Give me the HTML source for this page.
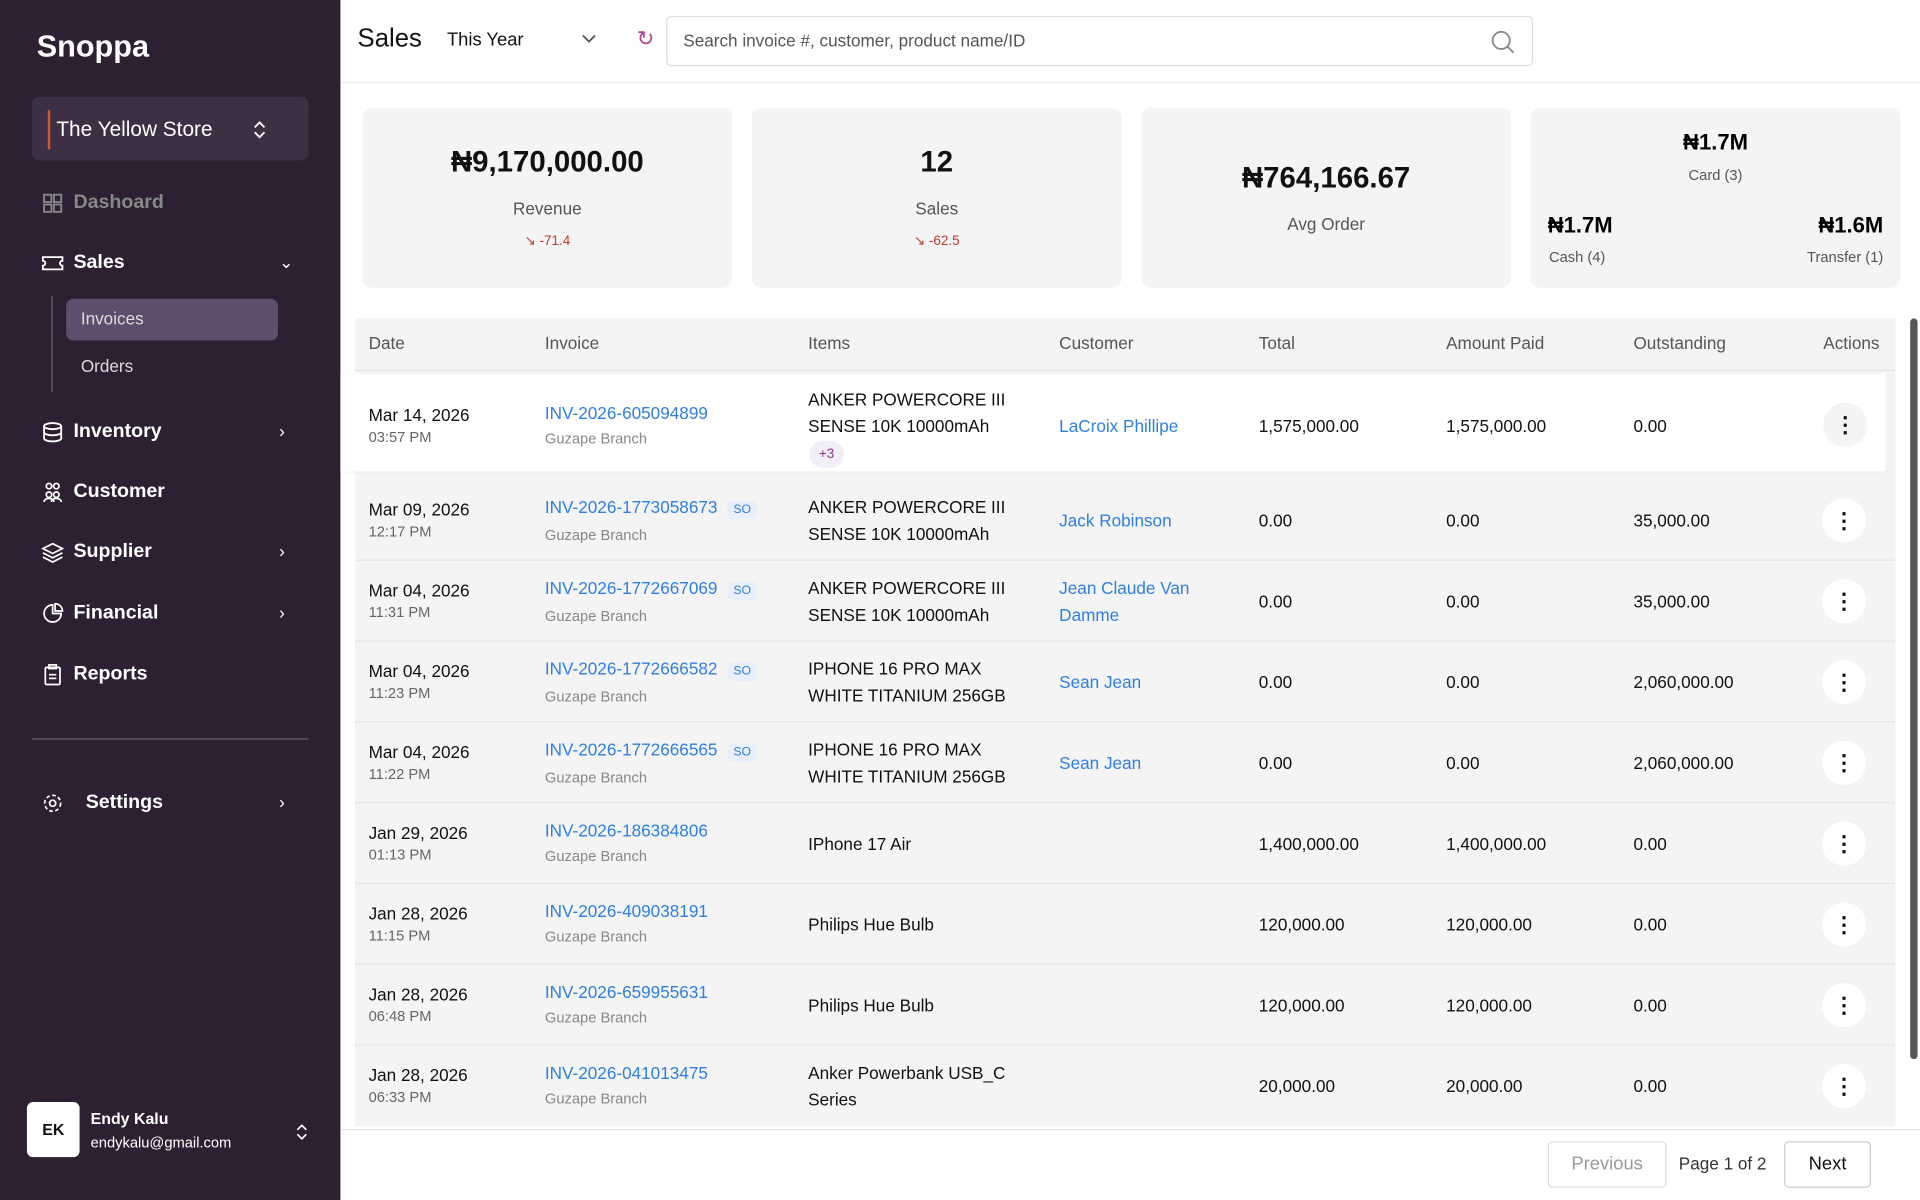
<!DOCTYPE html>
<html><head><meta charset="utf-8"><style>
*{box-sizing:border-box;margin:0;padding:0}
html,body{width:1920px;height:1200px;overflow:hidden;background:#fff;font-family:"Liberation Sans",sans-serif}
#w{width:1568px;height:980px;transform:scale(1.22449);transform-origin:0 0;position:relative}
.sb{position:absolute;left:0;top:0;width:278px;height:980px;background:#2c2032;color:#fff}
.abs{position:absolute}
.nav{position:absolute;left:34px;font-size:16px;font-weight:bold;display:flex;align-items:center;gap:8px}
.nav svg{width:18px;height:18px}
.chev{position:absolute;left:228px;font-size:14px}
.main{position:absolute;left:278px;top:0;right:0;bottom:0}
.card{position:absolute;top:88px;width:302px;height:147px;background:#f4f4f5;border-radius:8px;text-align:center}
.big{font-weight:bold;font-size:24px;color:#111}
.lbl{font-size:14px;color:#555}
.red{font-size:11px;color:#c0392b}
.th{position:absolute;top:272px;font-size:14px;color:#555}
.row{position:absolute;left:12px;width:1258px;height:66px;border-bottom:1px solid #e6e6e6}
.c{position:absolute;font-size:14px;color:#111}
.s{font-size:12px;color:#666;line-height:20px}
.lnk{color:#2f7fe0}
.g{font-size:12px;color:#888}
.so{display:inline-block;margin-left:8px;background:#e8eefb;color:#2f7fe0;font-size:10px;padding:2px 5px;border-radius:4px}
.dots{position:absolute;left:1198px;width:36px;height:36px;border-radius:50%;background:#fff;text-align:center;line-height:36px;font-weight:bold;font-size:18px;color:#111}
</style></head><body><div id="w">
<div class="sb">
 <div class="abs" style="left:30px;top:24px;font-size:25px;font-weight:bold">Snoppa</div>
 <div class="abs" style="left:26px;top:79px;width:226px;height:52px;background:#3d3045;border-radius:6px">
  <div class="abs" style="left:13px;top:11px;width:2px;height:32px;background:#d4572a"></div>
  <div class="abs" style="left:20px;top:17px;font-size:17px">The Yellow Store</div>
  <svg class="abs" style="left:180px;top:19px" width="12" height="16" viewBox="0 0 12 16" fill="none" stroke="#fff" stroke-width="1.5"><path d="M2 6l4-4 4 4M2 10l4 4 4-4"/></svg>
 </div>
 <div class="nav" style="top:157px;color:#888"><svg viewBox="0 0 18 18" fill="none" stroke="#888" stroke-width="1.5"><rect x="2" y="2" width="6" height="6"/><rect x="10" y="2" width="6" height="6"/><rect x="2" y="10" width="6" height="6"/><rect x="10" y="10" width="6" height="6"/></svg>Dashoard</div>
 <div class="nav" style="top:206px"><svg viewBox="0 0 18 18" fill="none" stroke="#fff" stroke-width="1.5"><path d="M1 4h16v3a2 2 0 0 0 0 4v3H1v-3a2 2 0 0 0 0-4z"/></svg>Sales</div><div class="chev" style="top:206px">⌄</div>
 <div class="abs" style="left:42px;top:242px;width:1px;height:78px;background:#666"></div>
 <div class="abs" style="left:54px;top:244px;width:173px;height:34px;background:#5e4d6c;border-radius:6px"></div>
 <div class="abs" style="left:66px;top:252px;font-size:14px;color:#ddd">Invoices</div>
 <div class="abs" style="left:66px;top:291px;font-size:14px;color:#ddd">Orders</div>
 <div class="nav" style="top:344px"><svg viewBox="0 0 18 18" fill="none" stroke="#fff" stroke-width="1.5"><ellipse cx="9" cy="4" rx="7" ry="2.5"/><path d="M2 4v10c0 1.4 3 2.5 7 2.5s7-1.1 7-2.5V4M2 9c0 1.4 3 2.5 7 2.5s7-1.1 7-2.5"/></svg>Inventory</div><div class="chev" style="top:344px">›</div>
 <div class="nav" style="top:393px"><svg viewBox="0 0 18 18" fill="none" stroke="#fff" stroke-width="1.4"><circle cx="6" cy="4" r="2.2"/><circle cx="12" cy="4" r="2.2"/><circle cx="6" cy="11" r="2.2"/><circle cx="12" cy="11" r="2.2"/><path d="M2 17c0-2 2-3 4-3s4 1 4 3M8 17c0-2 2-3 4-3s4 1 4 3"/></svg>Customer</div>
 <div class="nav" style="top:442px"><svg viewBox="0 0 18 18" fill="none" stroke="#fff" stroke-width="1.4"><path d="M9 2l8 4-8 4-8-4zM1 9.5l8 4 8-4M1 13l8 4 8-4"/></svg>Supplier</div><div class="chev" style="top:442px">›</div>
 <div class="nav" style="top:492px"><svg viewBox="0 0 18 18" fill="none" stroke="#fff" stroke-width="1.4"><path d="M9 2a7 7 0 1 0 7 7H9z"/><path d="M11 1v6h6a6 6 0 0 0-6-6z"/></svg>Financial</div><div class="chev" style="top:492px">›</div>
 <div class="nav" style="top:542px"><svg viewBox="0 0 18 18" fill="none" stroke="#fff" stroke-width="1.4"><rect x="3" y="3" width="12" height="14" rx="1"/><rect x="6" y="1" width="6" height="3"/><path d="M6 9h6M6 12h6"/></svg>Reports</div>
 <div class="abs" style="left:26px;top:603px;width:226px;height:1px;background:#666"></div>
 <div class="nav" style="top:647px;gap:18px"><svg viewBox="0 0 18 18" fill="none" stroke="#fff" stroke-width="1.4"><circle cx="9" cy="9" r="2.5"/><circle cx="9" cy="9" r="6.5" stroke-dasharray="3 2"/></svg>Settings</div><div class="chev" style="top:647px">›</div>
 <div class="abs" style="left:22px;top:900px;width:43px;height:45px;background:#fff;border-radius:5px;color:#111;font-size:13px;font-weight:bold;text-align:center;line-height:45px">EK</div>
 <div class="abs" style="left:74px;top:906px;font-size:13px;font-weight:bold">Endy Kalu</div>
 <div class="abs" style="left:74px;top:926px;font-size:12px">endykalu@gmail.com</div>
 <svg class="abs" style="left:241px;top:917px" width="11" height="15" viewBox="0 0 12 16" fill="none" stroke="#fff" stroke-width="1.5"><path d="M2 6l4-4 4 4M2 10l4 4 4-4"/></svg>
</div>
<div class="main">
 <div class="abs" style="left:14px;top:20px;font-size:21px;color:#111">Sales</div>
 <div class="abs" style="left:87px;top:24px;font-size:15px;color:#111">This Year</div>
 <svg class="abs" style="left:197px;top:28px" width="12" height="8" viewBox="0 0 12 8" fill="none" stroke="#555" stroke-width="1.5"><path d="M1 1l5 5 5-5"/></svg>
 <div class="abs" style="left:242px;top:22px;font-size:17px;color:#b04090">↻</div>
 <div class="abs" style="left:266px;top:13px;width:708px;height:41px;border:1px solid #ddd;border-radius:4px">
  <div class="abs" style="left:13px;top:11px;font-size:14px;color:#555">Search invoice #, customer, product name/ID</div>
  <svg class="abs" style="left:672px;top:10px" width="20" height="20" viewBox="0 0 20 20" fill="none" stroke="#888" stroke-width="1.5"><circle cx="9" cy="9" r="7"/><path d="M14 14l5 5"/></svg>
 </div>
 <div class="abs" style="left:0;top:67px;width:1290px;height:1px;background:#eee"></div>
 <div class="card" style="left:18px"><div class="big" style="margin-top:31px">₦9,170,000.00</div><div class="lbl" style="margin-top:15px">Revenue</div><div class="red" style="margin-top:12px">↘ -71.4</div></div>
 <div class="card" style="left:336px"><div class="big" style="margin-top:31px">12</div><div class="lbl" style="margin-top:15px">Sales</div><div class="red" style="margin-top:12px">↘ -62.5</div></div>
 <div class="card" style="left:654px"><div class="big" style="margin-top:44px">₦764,166.67</div><div class="lbl" style="margin-top:15px">Avg Order</div></div>
 <div class="card" style="left:972px">
  <div class="abs" style="left:0;right:0;top:18px;font-weight:bold;font-size:18px">₦1.7M</div><div class="abs" style="left:0;right:0;top:48px;font-size:12px;color:#555">Card (3)</div>
  <div class="abs" style="left:14px;top:86px;font-weight:bold;font-size:18px">₦1.7M</div><div class="abs" style="left:15px;top:115px;font-size:12px;color:#555">Cash (4)</div>
  <div class="abs" style="right:14px;top:86px;font-weight:bold;font-size:18px">₦1.6M</div><div class="abs" style="right:14px;top:115px;font-size:12px;color:#555">Transfer (1)</div>
 </div>
 <div class="abs" style="left:12px;top:260px;width:1258px;height:660px;background:#f4f4f4"></div>
 <div class="abs" style="left:12px;top:302px;width:1258px;height:1px;background:#e3e3e3"></div>
 <div class="th" style="left:23px">Date</div><div class="th" style="left:167px">Invoice</div><div class="th" style="left:382px">Items</div><div class="th" style="left:587px">Customer</div><div class="th" style="left:750px">Total</div><div class="th" style="left:903px">Amount Paid</div><div class="th" style="left:1056px">Outstanding</div><div class="th" style="left:1211px">Actions</div>
 <div class="abs" style="left:0;top:305px;width:1262px;height:80px;background:#fff;box-shadow:0 1px 3px rgba(0,0,0,.05)">
  <div class="c" style="left:23px;top:26px">Mar 14, 2026<br><span class="s">03:57 PM</span></div>
  <div class="c" style="left:167px;top:24px"><span class="lnk">INV-2026-605094899</span><br><span class="g" style="line-height:26px">Guzape Branch</span></div>
  <div class="c" style="left:382px;top:10px;line-height:22px">ANKER POWERCORE III<br>SENSE 10K 10000mAh</div>
  <div class="abs" style="left:383px;top:55px;width:28px;height:22px;border-radius:11px;background:#f1eef8;color:#8a3a8a;font-size:11px;text-align:center;line-height:22px">+3</div>
  <div class="c lnk" style="left:587px;top:35px">LaCroix Phillipe</div>
  <div class="c" style="left:750px;top:35px">1,575,000.00</div><div class="c" style="left:903px;top:35px">1,575,000.00</div><div class="c" style="left:1056px;top:35px">0.00</div>
  <div class="dots" style="left:1211px;top:24px;background:#f4f4f4">⋮</div>
 </div>
 <div class="abs" style="left:1282px;top:260px;width:6px;height:605px;background:#555;border-radius:3px"></div>

 <div class="row" style="top:392px"><div class="c" style="left:11px;top:16px">Mar 09, 2026<br><span class="s">12:17 PM</span></div><div class="c" style="left:155px;top:14px"><span class="lnk">INV-2026-1773058673</span><span class="so">SO</span><br><span class="g" style="line-height:26px">Guzape Branch</span></div><div class="c" style="left:370px;top:11px;line-height:22px">ANKER POWERCORE III<br>SENSE 10K 10000mAh</div><div class="c lnk" style="left:575px;top:25px">Jack Robinson</div><div class="c" style="left:738px;top:25px">0.00</div><div class="c" style="left:891px;top:25px">0.00</div><div class="c" style="left:1044px;top:25px">35,000.00</div><div class="dots" style="top:15px">⋮</div></div>
 <div class="row" style="top:458px"><div class="c" style="left:11px;top:16px">Mar 04, 2026<br><span class="s">11:31 PM</span></div><div class="c" style="left:155px;top:14px"><span class="lnk">INV-2026-1772667069</span><span class="so">SO</span><br><span class="g" style="line-height:26px">Guzape Branch</span></div><div class="c" style="left:370px;top:11px;line-height:22px">ANKER POWERCORE III<br>SENSE 10K 10000mAh</div><div class="c lnk" style="left:575px;top:11px;line-height:22px">Jean Claude Van<br>Damme</div><div class="c" style="left:738px;top:25px">0.00</div><div class="c" style="left:891px;top:25px">0.00</div><div class="c" style="left:1044px;top:25px">35,000.00</div><div class="dots" style="top:15px">⋮</div></div>
 <div class="row" style="top:524px"><div class="c" style="left:11px;top:16px">Mar 04, 2026<br><span class="s">11:23 PM</span></div><div class="c" style="left:155px;top:14px"><span class="lnk">INV-2026-1772666582</span><span class="so">SO</span><br><span class="g" style="line-height:26px">Guzape Branch</span></div><div class="c" style="left:370px;top:11px;line-height:22px">IPHONE 16 PRO MAX<br>WHITE TITANIUM 256GB</div><div class="c lnk" style="left:575px;top:25px">Sean Jean</div><div class="c" style="left:738px;top:25px">0.00</div><div class="c" style="left:891px;top:25px">0.00</div><div class="c" style="left:1044px;top:25px">2,060,000.00</div><div class="dots" style="top:15px">⋮</div></div>
 <div class="row" style="top:590px"><div class="c" style="left:11px;top:16px">Mar 04, 2026<br><span class="s">11:22 PM</span></div><div class="c" style="left:155px;top:14px"><span class="lnk">INV-2026-1772666565</span><span class="so">SO</span><br><span class="g" style="line-height:26px">Guzape Branch</span></div><div class="c" style="left:370px;top:11px;line-height:22px">IPHONE 16 PRO MAX<br>WHITE TITANIUM 256GB</div><div class="c lnk" style="left:575px;top:25px">Sean Jean</div><div class="c" style="left:738px;top:25px">0.00</div><div class="c" style="left:891px;top:25px">0.00</div><div class="c" style="left:1044px;top:25px">2,060,000.00</div><div class="dots" style="top:15px">⋮</div></div>
 <div class="row" style="top:656px"><div class="c" style="left:11px;top:16px">Jan 29, 2026<br><span class="s">01:13 PM</span></div><div class="c" style="left:155px;top:14px"><span class="lnk">INV-2026-186384806</span><br><span class="g" style="line-height:26px">Guzape Branch</span></div><div class="c" style="left:370px;top:25px">IPhone 17 Air</div><div class="c" style="left:738px;top:25px">1,400,000.00</div><div class="c" style="left:891px;top:25px">1,400,000.00</div><div class="c" style="left:1044px;top:25px">0.00</div><div class="dots" style="top:15px">⋮</div></div>
 <div class="row" style="top:722px"><div class="c" style="left:11px;top:16px">Jan 28, 2026<br><span class="s">11:15 PM</span></div><div class="c" style="left:155px;top:14px"><span class="lnk">INV-2026-409038191</span><br><span class="g" style="line-height:26px">Guzape Branch</span></div><div class="c" style="left:370px;top:25px">Philips Hue Bulb</div><div class="c" style="left:738px;top:25px">120,000.00</div><div class="c" style="left:891px;top:25px">120,000.00</div><div class="c" style="left:1044px;top:25px">0.00</div><div class="dots" style="top:15px">⋮</div></div>
 <div class="row" style="top:788px"><div class="c" style="left:11px;top:16px">Jan 28, 2026<br><span class="s">06:48 PM</span></div><div class="c" style="left:155px;top:14px"><span class="lnk">INV-2026-659955631</span><br><span class="g" style="line-height:26px">Guzape Branch</span></div><div class="c" style="left:370px;top:25px">Philips Hue Bulb</div><div class="c" style="left:738px;top:25px">120,000.00</div><div class="c" style="left:891px;top:25px">120,000.00</div><div class="c" style="left:1044px;top:25px">0.00</div><div class="dots" style="top:15px">⋮</div></div>
 <div class="row" style="top:854px;border:none"><div class="c" style="left:11px;top:16px">Jan 28, 2026<br><span class="s">06:33 PM</span></div><div class="c" style="left:155px;top:14px"><span class="lnk">INV-2026-041013475</span><br><span class="g" style="line-height:26px">Guzape Branch</span></div><div class="c" style="left:370px;top:11px;line-height:22px">Anker Powerbank USB_C<br>Series</div><div class="c" style="left:738px;top:25px">20,000.00</div><div class="c" style="left:891px;top:25px">20,000.00</div><div class="c" style="left:1044px;top:25px">0.00</div><div class="dots" style="top:15px">⋮</div></div>

 <div class="abs" style="left:0;top:922px;width:1290px;height:1px;background:#e6e6e6"></div>
 <div class="abs" style="left:986px;top:932px;width:97px;height:38px;border:1px solid #ddd;border-radius:4px;color:#999;font-size:15px;text-align:center;line-height:36px">Previous</div>
 <div class="abs" style="left:1093px;top:942px;font-size:14px;color:#333">Page 1 of 2</div>
 <div class="abs" style="left:1179px;top:932px;width:71px;height:38px;border:1px solid #ccc;border-radius:4px;color:#111;font-size:15px;text-align:center;line-height:36px">Next</div>
</div>
</div></body></html>
